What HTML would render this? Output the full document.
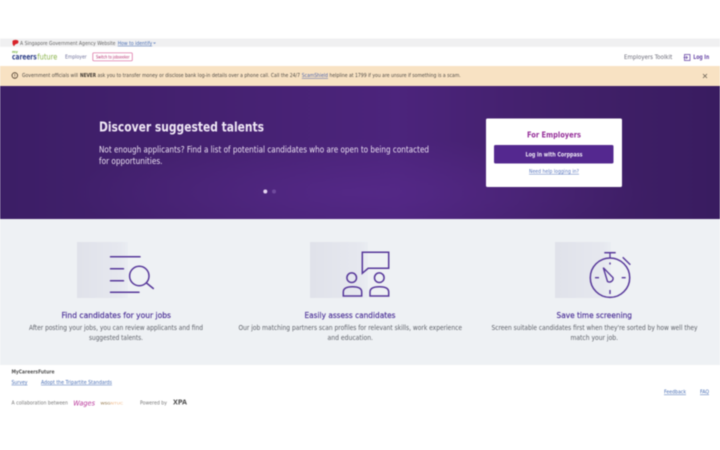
<!DOCTYPE html>
<html><head><meta charset="utf-8"><style>
html,body{margin:0;padding:0;background:#fff;width:720px;height:450px;overflow:hidden}
svg{display:block;filter:blur(.4px)}
text{font-family:"DejaVu Sans","Liberation Sans",sans-serif}
</style></head><body>
<svg xmlns="http://www.w3.org/2000/svg" width="720" height="450" viewBox="0 0 720 450">
<defs>
<linearGradient id="h" x1="0" y1="0" x2="1" y2="0">
<stop offset="0" stop-color="#3c1e66"/><stop offset=".25" stop-color="#44216f"/><stop offset=".55" stop-color="#4c247c"/><stop offset=".8" stop-color="#412069"/><stop offset="1" stop-color="#391c60"/>
</linearGradient>
<radialGradient id="g" cx=".5" cy=".8" r=".4"><stop offset="0" stop-color="#5b2c90" stop-opacity=".55"/><stop offset="1" stop-color="#5b2c90" stop-opacity="0"/></radialGradient>
<linearGradient id="b" x1="0" y1="0" x2="1" y2="0"><stop offset="0" stop-color="#e0e2ea"/><stop offset=".85" stop-color="#e6e8ef"/><stop offset="1" stop-color="#eaedf2"/></linearGradient>
</defs>
<rect width="720" height="450" fill="#fff"/>
<rect y="38.500" width="720" height="8.300" fill="#f0f0f1"/>
<path d="M12.500 41c1-1 3-1.500 5-.8 1.500.6 1 2.500.2 3.300-1 .5-2 .5-2.700 1.200l-1 1.500c-.8-.8-1.500-2-1.500-3 0-.7 0-1.600 0-2.200z" fill="#d8232a"/>
<text x="20" y="44.800" font-size="4.800" fill="#666" textLength="95.500" lengthAdjust="spacingAndGlyphs">A Singapore Government Agency Website</text>
<text x="117.700" y="44.800" font-size="4.800" fill="#4a6fb5" textLength="34.500" lengthAdjust="spacingAndGlyphs" text-decoration="underline">How to identify</text>
<path d="M153.500 42.500l1 1 1-1" stroke="#4a6fb5" stroke-width=".6" fill="none"/>

<text x="12" y="53" font-size="3.500" fill="#7ab648" font-weight="bold">my</text>
<text x="12" y="59.300" font-size="8" font-weight="bold" fill="#2c3e87" textLength="24.700" lengthAdjust="spacingAndGlyphs">careers</text>
<text x="37.300" y="59.300" font-size="8" fill="#8ab34a" textLength="20" lengthAdjust="spacingAndGlyphs">future</text>
<text x="65" y="58.500" font-size="5.400" fill="#6d6f9a" textLength="21.700" lengthAdjust="spacingAndGlyphs">Employer</text>
<rect x="92.800" y="52.800" width="39.500" height="8" rx="1" fill="#fff" stroke="#d8649b" stroke-width=".7"/>
<text x="96" y="58.300" font-size="4" fill="#b52a6c" textLength="33.500" lengthAdjust="spacingAndGlyphs">Switch to jobseeker</text>
<text x="624" y="58.800" font-size="5.800" fill="#6b6b78" textLength="48.300" lengthAdjust="spacingAndGlyphs">Employers Toolkit</text>
<rect x="684.500" y="54.500" width="5.500" height="6" fill="none" stroke="#6b4aa8" stroke-width=".8"/>
<path d="M683.500 57.500h4M686 56l1.500 1.500-1.500 1.500" stroke="#6b4aa8" stroke-width=".7" fill="none"/>
<text x="693.300" y="59" font-size="5.800" font-weight="bold" fill="#6b4aa8" textLength="16" lengthAdjust="spacingAndGlyphs">Log In</text>

<rect y="66" width="720" height="20" fill="#f8e2c3"/>
<circle cx="14.800" cy="75.500" r="2.800" fill="none" stroke="#4a3a2a" stroke-width=".8"/>
<path d="M14.800 74v2M14.800 76.500v.6" stroke="#4a3a2a" stroke-width=".6"/>
<text x="22" y="77.200" font-size="4.900" fill="#4f4a44" textLength="56" lengthAdjust="spacingAndGlyphs">Government officials will</text>
<text x="80" y="77.200" font-size="4.900" font-weight="bold" fill="#3c3530" textLength="16" lengthAdjust="spacingAndGlyphs">NEVER</text>
<text x="97.500" y="77.200" font-size="4.900" fill="#4f4a44" textLength="202.500" lengthAdjust="spacingAndGlyphs">ask you to transfer money or disclose bank log-in details over a phone call. Call the 24/7</text>
<text x="301.800" y="77.200" font-size="4.900" fill="#4b62a8" textLength="26.200" lengthAdjust="spacingAndGlyphs" text-decoration="underline">ScamShield</text>
<text x="329.500" y="77.200" font-size="4.900" fill="#4f4a44" textLength="131.200" lengthAdjust="spacingAndGlyphs">helpline at 1799 if you are unsure if something is a scam.</text>
<path d="M703 74l4 4M707 74l-4 4" stroke="#5f574c" stroke-width=".7"/>

<rect y="86" width="720" height="133" fill="url(#h)"/>
<rect y="86" width="720" height="133" fill="url(#g)"/>
<text x="99" y="131.500" font-size="13.500" font-weight="bold" fill="#f0e8f6" textLength="165" lengthAdjust="spacingAndGlyphs">Discover suggested talents</text>
<text x="99" y="152.300" font-size="9" fill="#ece2f3" textLength="330" lengthAdjust="spacingAndGlyphs">Not enough applicants? Find a list of potential candidates who are open to being contacted</text>
<text x="99" y="164" font-size="9" fill="#ece2f3" textLength="63.500" lengthAdjust="spacingAndGlyphs">for opportunities.</text>
<circle cx="265.300" cy="191.500" r="2" fill="#e6d6f2"/>
<circle cx="274" cy="191.500" r="2" fill="#6f4a9d"/>

<rect x="486" y="118.500" width="136" height="68.500" rx="1.500" fill="#fff"/>
<text x="527" y="137.300" font-size="8" font-weight="bold" fill="#96309a" textLength="54" lengthAdjust="spacingAndGlyphs">For Employers</text>
<rect x="494" y="145" width="119.500" height="18.500" rx="1.500" fill="#54288f"/>
<text x="525.500" y="156.300" font-size="5.800" font-weight="bold" fill="#eee8f5" textLength="57" lengthAdjust="spacingAndGlyphs">Log in with Corppass</text>
<text x="529" y="173" font-size="4.800" fill="#5a78bf" textLength="50" lengthAdjust="spacingAndGlyphs" text-decoration="underline">Need help logging in?</text>

<rect y="219" width="720" height="146" fill="#eef1f4"/>

<rect x="77" y="242" width="51" height="56" fill="url(#b)"/>
<g stroke="#57389a" stroke-width="1.500" fill="none" stroke-linecap="round">
<path d="M110.500 256.700h29.500M110.500 268.700h13M110.500 280.700h13M110.500 292.300h28.500"/>
<circle cx="139.300" cy="276" r="9.700"/>
<path d="M146.500 283l6.800 5.500"/>
</g>

<rect x="310" y="242" width="58" height="56" fill="url(#b)"/>
<g stroke="#57389a" stroke-width="1.500" fill="none">
<path d="M362.300 273.300v-21h26.400v16h-20.500l-5.900 5z"/>
<circle cx="351.700" cy="277.700" r="4.800"/>
<circle cx="379.300" cy="277.700" r="4.800"/>
<path d="M343.300 296v-4c0-4 3.500-5.300 9.200-5.300s9.200 1.300 9.200 5.300v4z"/>
<path d="M370 296v-4c0-4 3.500-5.300 9.300-5.300s9.400 1.300 9.400 5.300v4z"/>
</g>

<rect x="555" y="242" width="56" height="56" fill="url(#b)"/>
<g stroke="#57389a" fill="none">
<circle cx="610" cy="277.700" r="19.700" stroke-width="1.500"/>
<path d="M604.300 252.700h11.400" stroke-width="1.500"/>
<path d="M610 252.700v5" stroke-width="1.300"/>
<path d="M622.700 257.300l7.600 7.400" stroke-width="1.400"/>
<path d="M610 262.500v2M610 290v4M595 277.700h4M621.700 277.700h4" stroke-width="1.400"/>
<path d="M603.300 267.700l9.700 10a3.600 3.600 0 0 1-5.500 3.700z" stroke-width="1.400"/>
</g>

<g>
<text x="61.500" y="318" font-size="8" fill="#50369a" stroke="#50369a" stroke-width=".2" textLength="109.500" lengthAdjust="spacingAndGlyphs">Find candidates for your jobs</text>
<text x="29" y="330" font-size="6.700" fill="#5d6068" textLength="174" lengthAdjust="spacingAndGlyphs">After posting your jobs, you can review applicants and find</text>
<text x="89" y="340" font-size="6.700" fill="#5d6068" textLength="54" lengthAdjust="spacingAndGlyphs">suggested talents.</text>

<text x="304.500" y="318" font-size="8" fill="#50369a" stroke="#50369a" stroke-width=".2" textLength="91" lengthAdjust="spacingAndGlyphs">Easily assess candidates</text>
<text x="238.500" y="330" font-size="6.700" fill="#5d6068" textLength="223.500" lengthAdjust="spacingAndGlyphs">Our job matching partners scan profiles for relevant skills, work experience</text>
<text x="327.500" y="340" font-size="6.700" fill="#5d6068" textLength="45.500" lengthAdjust="spacingAndGlyphs">and education.</text>

<text x="556.500" y="318" font-size="8" fill="#50369a" stroke="#50369a" stroke-width=".2" textLength="75.500" lengthAdjust="spacingAndGlyphs">Save time screening</text>
<text x="491.500" y="330" font-size="6.700" fill="#5d6068" textLength="206" lengthAdjust="spacingAndGlyphs">Screen suitable candidates first when they're sorted by how well they</text>
<text x="570.500" y="340" font-size="6.700" fill="#5d6068" textLength="47.500" lengthAdjust="spacingAndGlyphs">match your job.</text>
</g>

<text x="11.500" y="373.500" font-size="4.800" font-weight="bold" fill="#555" textLength="43" lengthAdjust="spacingAndGlyphs">MyCareersFuture</text>
<text x="11.500" y="383.800" font-size="4.800" fill="#4a6fb5" textLength="16" lengthAdjust="spacingAndGlyphs" text-decoration="underline">Survey</text>
<text x="41" y="383.800" font-size="4.800" fill="#4a6fb5" textLength="71" lengthAdjust="spacingAndGlyphs" text-decoration="underline">Adopt the Tripartite Standards</text>
<text x="11.500" y="404.500" font-size="4.800" fill="#777" textLength="56.500" lengthAdjust="spacingAndGlyphs">A collaboration between</text>
<text x="73.300" y="405.500" font-size="7" fill="#b9369a" font-style="italic" textLength="21.700" lengthAdjust="spacingAndGlyphs">Wages</text>
<text x="100.500" y="404.500" font-size="3.800" fill="#8a6a3a" textLength="10" lengthAdjust="spacingAndGlyphs">WSG</text>
<text x="110.500" y="404.500" font-size="3.800" fill="#efb27c" textLength="12.500" lengthAdjust="spacingAndGlyphs">NTUC</text>
<text x="140" y="404.500" font-size="4.800" fill="#777" textLength="27" lengthAdjust="spacingAndGlyphs">Powered by</text>
<text x="173" y="404.500" font-size="7" font-weight="bold" fill="#555" textLength="14" lengthAdjust="spacingAndGlyphs">XPA</text>
<text x="664" y="393.500" font-size="4.800" fill="#4a6fb5" textLength="22" lengthAdjust="spacingAndGlyphs" text-decoration="underline">Feedback</text>
<text x="700" y="393.500" font-size="4.800" fill="#4a6fb5" textLength="9" lengthAdjust="spacingAndGlyphs" text-decoration="underline">FAQ</text>
</svg>
</body></html>
